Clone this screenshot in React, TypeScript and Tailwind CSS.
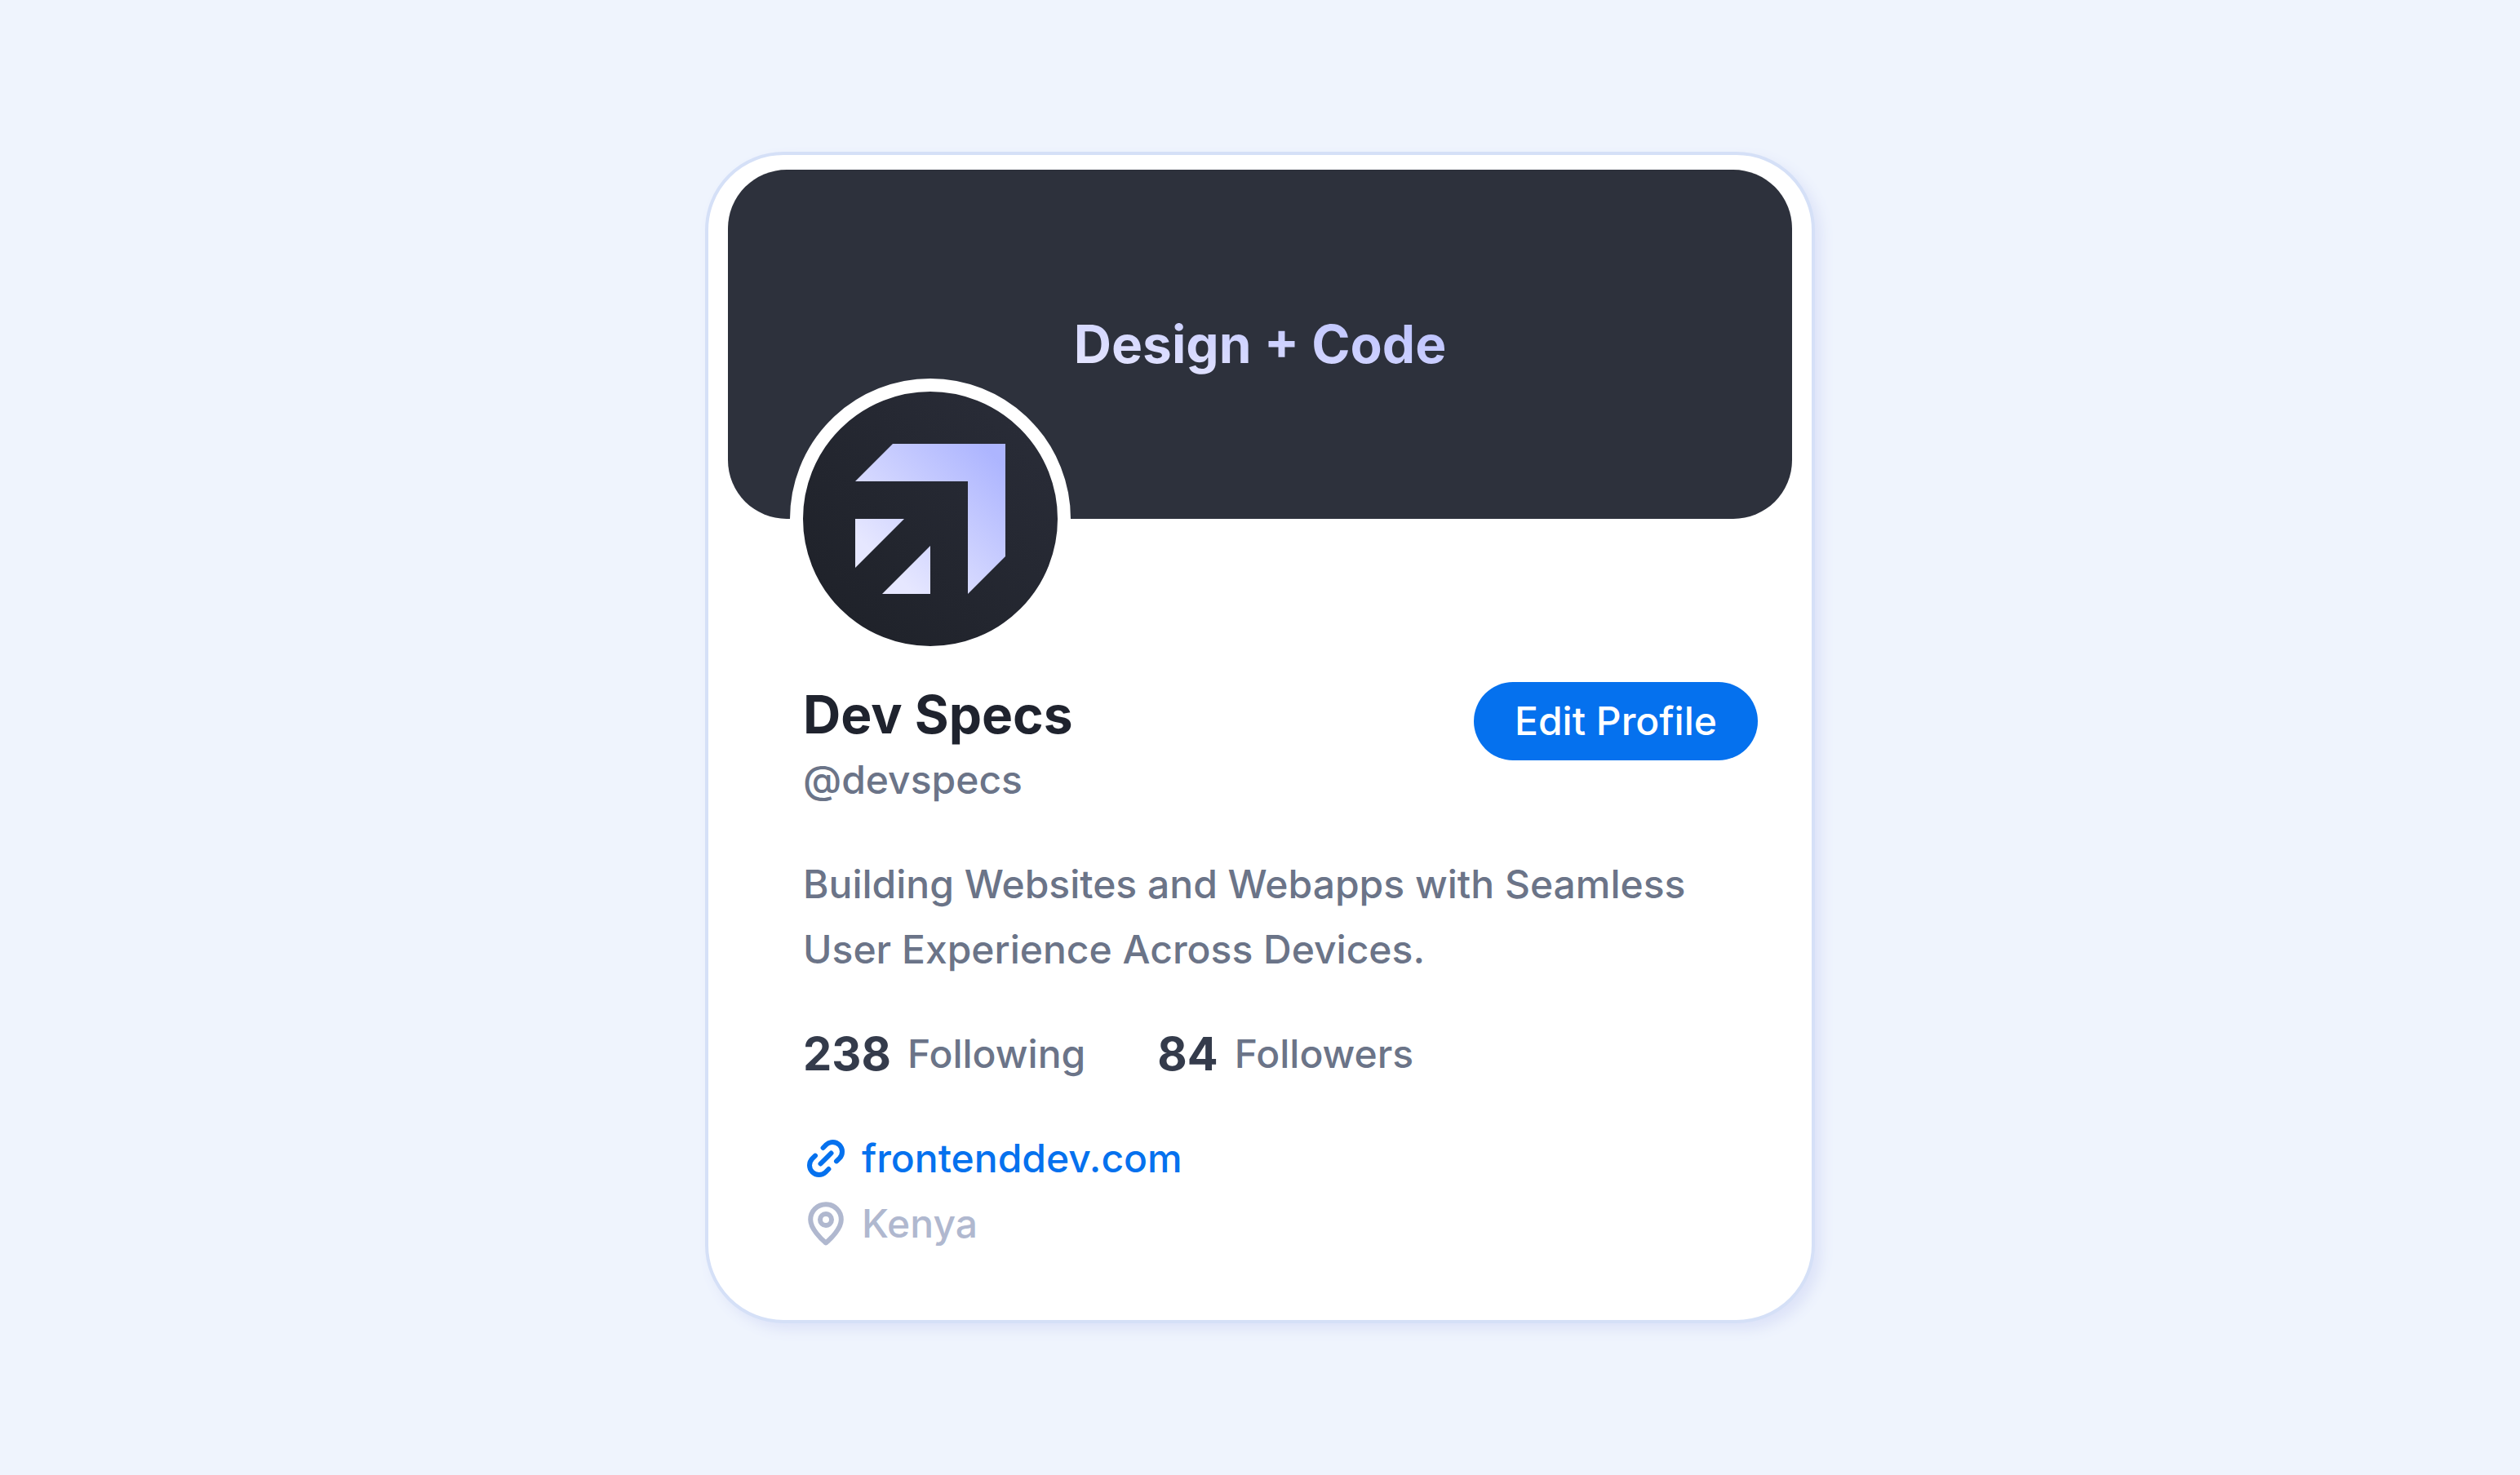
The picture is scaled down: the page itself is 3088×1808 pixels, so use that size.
function BrandMark() {
  return (
    <svg viewBox="0 0 184 184" className="size-[184px]" role="img" aria-label="Dev Specs logo">
      <defs>
        <linearGradient id="mark" gradientUnits="userSpaceOnUse" x1="170" y1="14" x2="36" y2="148">
          <stop offset="0" stopColor="#adb5ff" />
          <stop offset="1" stopColor="#e6e7ff" />
        </linearGradient>
      </defs>
      <path fill="url(#mark)" d="M46 0H184V138L138 184V46H0Z M0 92H60L0 152Z M92 125V184H33Z" />
    </svg>
  );
}

function LinkIcon() {
  return (
    <svg viewBox="0 0 56 56" className="size-14 shrink-0" fill="none" stroke="currentColor" strokeWidth="6" strokeLinecap="round" aria-hidden="true">
      <path d="M21.5 34.5 L34.5 21.5" />
      <path d="M24.6 15 L28.4 11.2 A11.6 11.6 0 0 1 44.8 27.6 L41 31.4" />
      <path d="M15 24.6 L11.2 28.4 A11.6 11.6 0 0 0 27.6 44.8 L31.4 41" />
    </svg>
  );
}

function PinIcon() {
  return (
    <svg viewBox="0 0 56 56" className="size-14 shrink-0" fill="none" stroke="currentColor" strokeWidth="6" strokeLinejoin="round" aria-hidden="true">
      <path d="M28 51.5 C22 46.5 9.2 34 9.2 23 A18.8 18.8 0 0 1 46.8 23 C46.8 34 34 46.5 28 51.5 Z" />
      <circle cx="28" cy="23" r="7" />
    </svg>
  );
}

function Stat({ value, label }: { value: string; label: string }) {
  return (
    <li className="flex items-center gap-5">
      <strong className="text-[56px] leading-[80px] font-bold text-[#343b4b]">{value}</strong>
      <span>{label}</span>
    </li>
  );
}

export default function App() {
  return (
    <main className="flex min-h-screen items-center justify-center bg-[#eff4fd] font-['Inter',sans-serif]">
      <article className="w-full max-w-[1360px] rounded-[96px] border-4 border-[#d5e0f7] bg-white px-6 pt-[18px] pb-[78px] shadow-[8px_8px_16px_#dde3f8]">
        <header className="flex h-[428px] items-center justify-center rounded-[72px] bg-[#2d313c]">
          <p className="bg-linear-[to_top_right] from-[#ebebff] to-[#b4bbff] bg-clip-text text-[64px] leading-[96px] font-bold text-transparent">
            Design + Code
          </p>
        </header>

        <div className="relative -mt-[172px] ml-[76px] flex size-[344px] items-center justify-center rounded-full border-[16px] border-white bg-linear-to-bl from-[#2b2e3a] to-[#1d2027] bg-origin-border">
          <BrandMark />
        </div>

        <div className="mt-7 flex flex-col gap-12 pr-[42px] pl-[92px] text-[48px] leading-[80px] font-medium text-[#6b7488]">
          <div className="flex items-start justify-between">
            <div>
              <h1 className="text-[64px] leading-[80px] font-bold text-[#1f232e]">Dev Specs</h1>
              <p>@devspecs</p>
            </div>
            <button type="button" className="h-24 rounded-full bg-[#0571ee] px-[50px] text-[48px] leading-[72px] font-medium text-white">
              Edit Profile
            </button>
          </div>

          <p className="max-w-[1120px]">
            Building Websites and Webapps with Seamless User Experience Across Devices.
          </p>

          <ul className="flex gap-[88px]">
            <Stat value="238" label="Following" />
            <Stat value="84" label="Followers" />
          </ul>

          <div>
            <a href="#" className="flex w-fit items-center gap-4 text-[#0571ee]">
              <LinkIcon />
              frontenddev.com
            </a>
            <p className="flex items-center gap-4 text-[#b0b8cf]">
              <PinIcon />
              Kenya
            </p>
          </div>
        </div>
      </article>
    </main>
  );
}
